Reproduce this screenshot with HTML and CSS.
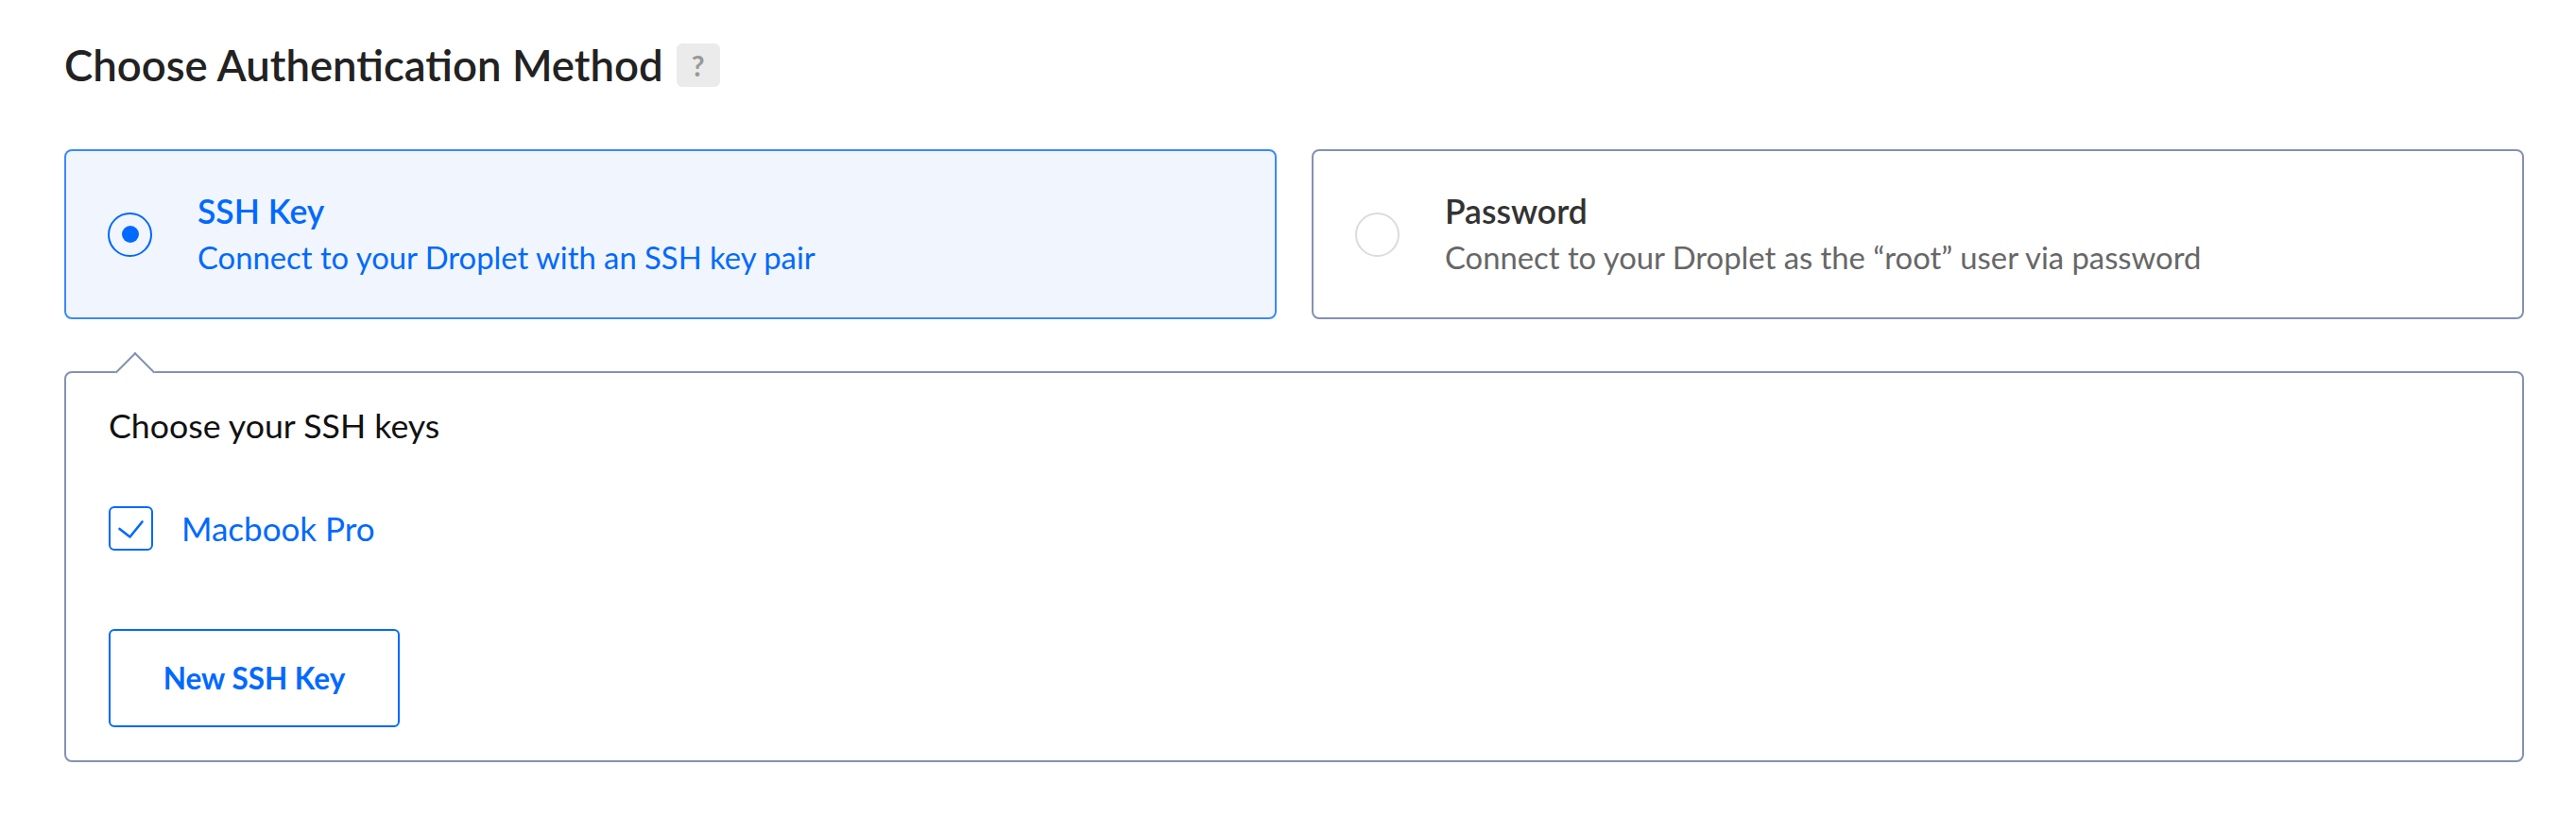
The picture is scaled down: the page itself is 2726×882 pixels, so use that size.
FILE: index.html
```html
<!DOCTYPE html>
<html lang="en">
<head>
<meta charset="utf-8">
<title>Choose Authentication Method</title>
<link rel="stylesheet" href="styles.css">
</head>
<body>
<div class="page">
  <div class="heading-row">
    <h2 class="heading">Choose Authentication Method</h2>
    <span class="help">?</span>
  </div>

  <div class="methods">
    <label class="method is-selected">
      <span class="radio"><span class="radio-dot"></span></span>
      <span class="method-text">
        <span class="method-title">SSH Key</span>
        <span class="method-desc">Connect to your Droplet with an SSH key pair</span>
      </span>
    </label>
    <label class="method">
      <span class="radio"></span>
      <span class="method-text">
        <span class="method-title">Password</span>
        <span class="method-desc">Connect to your Droplet as the “root” user via password</span>
      </span>
    </label>
  </div>

  <div class="keys-panel">
    <div class="keys-title">Choose your SSH keys</div>
    <label class="key-row">
      <span class="checkbox">
        <svg width="47" height="47" viewBox="0 0 47 47"><polyline points="11.5,24 22.5,32.5 35.5,16.5" fill="none" stroke="#0069ff" stroke-width="2.6" stroke-linecap="round" stroke-linejoin="round"/></svg>
      </span>
      <span class="key-name">Macbook Pro</span>
    </label>
    <button class="btn-new">New SSH Key</button>
  </div>
</div>
</body>
</html>
```

FILE: styles.css
```css
* { box-sizing: border-box; }
html, body { margin: 0; padding: 0; background: #ffffff; }
body { font-family: "Lato", "Liberation Sans", sans-serif; color: #222; }

.page { padding: 46px 55px 0 68px; }

.heading-row { display: flex; align-items: center; gap: 14px; height: 46px; }
.heading { margin: 0; font-size: 45.5px; line-height: 46px; font-weight: 600; color: #222; letter-spacing: 0; }
.help {
  width: 46px; height: 46px; border-radius: 6px; background: #ebebeb; color: #999999;
  display: flex; align-items: center; justify-content: center; font-size: 30px; font-weight: 700;
}

.methods { display: grid; grid-template-columns: 1fr 1fr; gap: 37px; margin-top: 66px; }
.method {
  display: flex; align-items: center; height: 180px; padding-left: 44px;
  border: 2px solid #8491b1; border-radius: 8px; background: #fff; gap: 48px;
}
.method.is-selected { border-color: #3a8afa; background: #f1f6fe; }
.radio {
  width: 47px; height: 47px; border-radius: 50%; border: 2px solid #dcdcdc; flex: none;
  display: flex; align-items: center; justify-content: center;
}
.is-selected .radio { border-color: #0069ff; }
.radio-dot { width: 18px; height: 18px; border-radius: 50%; background: #0069ff; }
.method-text { display: flex; flex-direction: column; gap: 5px; }
.method-title { font-size: 35.5px; line-height: 44px; font-weight: 600; color: #333; }
.method-desc { font-size: 32.8px; line-height: 44px; color: #676767; }
.is-selected .method-title, .is-selected .method-desc { color: #0069ff; }

.keys-panel {
  position: relative; margin-top: 55px; border: 2px solid #8491b1; border-radius: 8px;
  padding: 36px 45px 35px; display: flex; flex-direction: column; align-items: flex-start;
}
.keys-panel::before {
  content: ""; position: absolute; left: 58px; top: -16px; width: 28px; height: 28px;
  background: #fff; border-top: 2px solid #8491b1; border-left: 2px solid #8491b1;
  transform: rotate(45deg);
}
.keys-title { font-size: 35.7px; line-height: 40px; color: #111; }
.key-row { display: flex; align-items: center; gap: 30px; margin-top: 65px; height: 47px; }
.checkbox {
  width: 47px; height: 47px; border: 2px solid #0069ff; border-radius: 6px; position: relative; flex: none;
}
.checkbox svg { position: absolute; left: -2px; top: -2px; }
.key-name { font-size: 35px; line-height: 47px; color: #0069ff; }
.btn-new {
  margin-top: 83px; width: 308px; height: 104px; border: 2px solid #0069ff; border-radius: 6px;
  background: #fff; color: #0069ff; font-family: inherit; font-size: 31.5px; font-weight: 700; padding: 0;
}
```
